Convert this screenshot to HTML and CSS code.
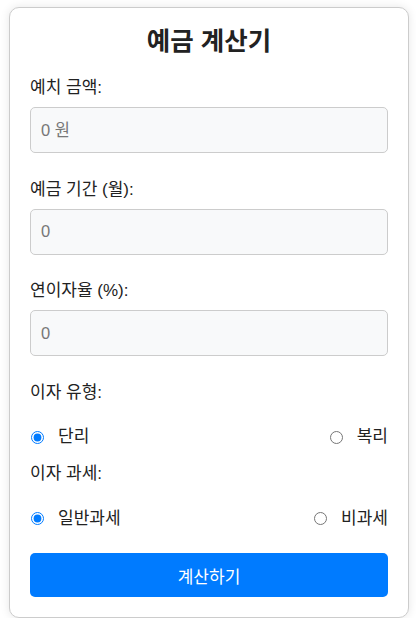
FILE: index.html
```html
<!DOCTYPE html>
<html lang="ko">
<head>
<meta charset="utf-8">
<title>예금 계산기</title>
<link rel="stylesheet" href="styles.css">
</head>
<body>
<div class="card">
  <h2 class="title">예금 계산기</h2>
  <div class="field">
    <label class="field-label" for="amount">예치 금액:</label>
    <input class="field-input" id="amount" type="text" placeholder="0 원">
  </div>
  <div class="field">
    <label class="field-label" for="period">예금 기간 (월):</label>
    <input class="field-input" id="period" type="text" placeholder="0">
  </div>
  <div class="field">
    <label class="field-label" for="rate">연이자율 (%):</label>
    <input class="field-input" id="rate" type="text" placeholder="0">
  </div>
  <div class="section-label">이자 유형:</div>
  <div class="radio-row">
    <label class="radio-item"><input type="radio" name="type" checked>단리</label>
    <label class="radio-item"><input type="radio" name="type">복리</label>
  </div>
  <div class="section-label">이자 과세:</div>
  <div class="radio-row radio-row-last">
    <label class="radio-item"><input type="radio" name="tax" checked>일반과세</label>
    <label class="radio-item"><input type="radio" name="tax">비과세</label>
  </div>
  <button class="calc-btn" type="button">계산하기</button>
</div>
</body>
</html>
```
FILE: styles.css
```css
html, body {
  margin: 0;
  padding: 0;
  background: #ffffff;
}
body {
  font-family: "Liberation Sans", "Noto Sans CJK KR", sans-serif;
  font-size: 17px;
  color: #222;
}
.card {
  box-sizing: border-box;
  width: 400px;
  margin: 7px 0 0 9px;
  padding: 18px 20px 20px;
  border: 1px solid #cccccc;
  border-radius: 10px;
  background: #fff;
  box-shadow: 0 0 10px rgba(0, 0, 0, 0.1);
}
.title {
  margin: 0 0 22px;
  font-size: 25.5px;
  line-height: 30px;
  font-weight: bold;
  text-align: center;
  color: #222;
}
.field {
  margin-bottom: 26.5px;
}
.field-label {
  display: block;
  line-height: 20px;
  margin-bottom: 9px;
}
.field-input {
  box-sizing: border-box;
  display: block;
  width: 100%;
  height: 46px;
  padding: 0 10px;
  border: 1px solid #cccccc;
  border-radius: 5px;
  background: #f8f9fa;
  font-family: "Liberation Sans", "Noto Sans CJK KR", sans-serif;
  font-size: 16.5px;
  color: #222;
}
.field-input::placeholder {
  color: #777;
}
.section-label {
  line-height: 20px;
  margin-bottom: 24.5px;
}
.radio-row {
  display: flex;
  justify-content: space-between;
  align-items: center;
  height: 20px;
  margin-bottom: 17px;
}
.radio-row-last {
  margin-bottom: 24.5px;
}
.radio-item {
  display: flex;
  align-items: center;
  line-height: 20px;
}
.radio-item input {
  margin: 0 14px 0 1px;
  width: 13px;
  height: 13px;
  accent-color: #007bff;
}
.calc-btn {
  display: block;
  width: 100%;
  height: 44px;
  border: none;
  border-radius: 5px;
  background: #007bff;
  color: #fff;
  font-family: "Liberation Sans", "Noto Sans CJK KR", sans-serif;
  font-size: 17px;
}
```
